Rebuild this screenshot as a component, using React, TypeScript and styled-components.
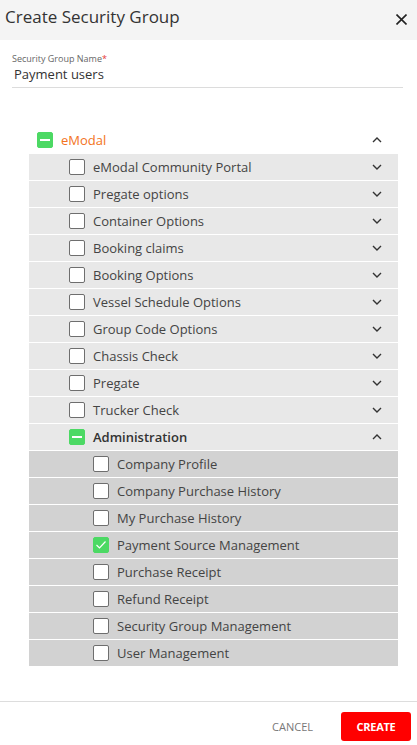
import React from 'react';
import styled, { createGlobalStyle } from 'styled-components';

type Mark = 'none' | 'checked' | 'partial';

interface Node {
  label: string;
  mark: Mark;
  open?: boolean;
  children?: Node[];
}

const admin: Node[] = [
  { label: 'Company Profile', mark: 'none' },
  { label: 'Company Purchase History', mark: 'none' },
  { label: 'My Purchase History', mark: 'none' },
  { label: 'Payment Source Management', mark: 'checked' },
  { label: 'Purchase Receipt', mark: 'none' },
  { label: 'Refund Receipt', mark: 'none' },
  { label: 'Security Group Management', mark: 'none' },
  { label: 'User Management', mark: 'none' },
];

const modules: Node[] = [
  { label: 'eModal Community Portal', mark: 'none' },
  { label: 'Pregate options', mark: 'none' },
  { label: 'Container Options', mark: 'none' },
  { label: 'Booking claims', mark: 'none' },
  { label: 'Booking Options', mark: 'none' },
  { label: 'Vessel Schedule Options', mark: 'none' },
  { label: 'Group Code Options', mark: 'none' },
  { label: 'Chassis Check', mark: 'none' },
  { label: 'Pregate', mark: 'none' },
  { label: 'Trucker Check', mark: 'none' },
  { label: 'Administration', mark: 'partial', open: true, children: admin },
];

const Chevron: React.FC<{ up?: boolean }> = ({ up }) => (
  <ChevronBox>
    <svg width="10" height="6" viewBox="0 0 10 6">
      <path
        d={up ? 'M1 5 L5 1 L9 5' : 'M1 1 L5 5 L9 1'}
        fill="none"
        stroke="#333"
        strokeWidth="1.4"
      />
    </svg>
  </ChevronBox>
);

const CheckBox: React.FC<{ mark: Mark }> = ({ mark }) => (
  <Box $on={mark !== 'none'}>
    {mark === 'checked' && (
      <svg width="12" height="10" viewBox="0 0 12 10">
        <path d="M1.5 5 L4.5 8 L10.5 1.5" fill="none" stroke="#fff" strokeWidth="1.2" />
      </svg>
    )}
    {mark === 'partial' && <Dash />}
  </Box>
);

const App: React.FC = () => {
  return (
    <>
      <GlobalStyle />
      <Dialog>
        <Header>
          <Title>Create Security Group</Title>
          <Close>
            <svg width="11" height="11" viewBox="0 0 11 11">
              <path d="M0.5 0.5 L10.5 10.5 M10.5 0.5 L0.5 10.5" stroke="#222" strokeWidth="1.6" />
            </svg>
          </Close>
        </Header>

        <Body>
          <Field>
            <Label>
              Security Group Name<Req>*</Req>
            </Label>
            <Value>Payment users</Value>
          </Field>

          <Tree>
            <RootRow>
              <CheckBox mark="partial" />
              <RootLabel>eModal</RootLabel>
              <Chevron up />
            </RootRow>
            {modules.map((m) => (
              <React.Fragment key={m.label}>
                <Row $level={1}>
                  <CheckBox mark={m.mark} />
                  <RowLabel $bold={!!m.children}>{m.label}</RowLabel>
                  <Chevron up={m.open} />
                </Row>
                {m.children?.map((c) => (
                  <Row key={c.label} $level={2}>
                    <CheckBox mark={c.mark} />
                    <RowLabel>{c.label}</RowLabel>
                  </Row>
                ))}
              </React.Fragment>
            ))}
          </Tree>
        </Body>

        <Footer>
          <CancelButton>CANCEL</CancelButton>
          <CreateButton>CREATE</CreateButton>
        </Footer>
      </Dialog>
    </>
  );
};

export default App;

const GlobalStyle = createGlobalStyle`
  body {
    margin: 0;
    background: #fff;
    font-family: "Open Sans", "Noto Sans", sans-serif;
  }
`;

const Dialog = styled.div`
  width: 417px;
  height: 745px;
  display: flex;
  flex-direction: column;
  background: #fff;
`;

const Header = styled.header`
  height: 40px;
  background: #f4f4f4;
  display: flex;
  align-items: center;
  justify-content: space-between;
  padding: 0 10px 7px 5px;
  box-sizing: border-box;
`;

const Title = styled.h1`
  margin: 0;
  font-size: 17px;
  font-weight: 400;
  color: #333;
`;

const Close = styled.span`
  display: flex;
  margin-top: 6px;
`;

const Body = styled.main`
  flex: 1;
  padding: 12px 14px 0 12px;
`;

const Field = styled.div`
  border-bottom: 1px solid #dcdcdc;
  padding-bottom: 4px;
`;

const Label = styled.div`
  font-size: 9px;
  color: #666;
  line-height: 13px;
`;

const Req = styled.span`
  color: #e53935;
`;

const Value = styled.div`
  font-size: 13px;
  color: #333;
  padding-left: 2px;
  line-height: 18px;
`;

const Tree = styled.div`
  margin: 39px 5px 0 17px;
  display: flex;
  flex-direction: column;
  gap: 1px;
`;

const ChevronBox = styled.span`
  margin-left: auto;
  width: 10px;
  display: flex;
  margin-right: 16px;
`;

const Box = styled.span<{ $on: boolean }>`
  width: 16px;
  height: 16px;
  box-sizing: border-box;
  border-radius: 2px;
  flex-shrink: 0;
  display: flex;
  align-items: center;
  justify-content: center;
  background: ${({ $on }) => ($on ? '#4cd964' : '#fff')};
  border: 1px solid ${({ $on }) => ($on ? '#4cd964' : '#6e6e6e')};
`;

const Dash = styled.span`
  width: 10px;
  height: 1.5px;
  background: #fff;
`;

const RootRow = styled.div`
  height: 26px;
  display: flex;
  align-items: center;
  gap: 8px;
  padding-left: 8px;
`;

const RootLabel = styled.span`
  font-size: 13px;
  color: #f37321;
`;

const Row = styled.div<{ $level: number }>`
  height: 26px;
  display: flex;
  align-items: center;
  gap: 8px;
  padding-left: ${({ $level }) => ($level === 1 ? 40 : 64)}px;
  background: ${({ $level }) => ($level === 1 ? '#e8e8e8' : '#d2d2d2')};
`;

const RowLabel = styled.span<{ $bold?: boolean }>`
  font-size: 13px;
  color: ${({ $bold }) => ($bold ? '#333' : '#444')};
  font-weight: ${({ $bold }) => ($bold ? 600 : 400)};
`;

const Footer = styled.footer`
  height: 44px;
  border-top: 1px solid #ddd;
  display: flex;
  align-items: center;
  justify-content: flex-end;
  gap: 28px;
  padding: 6px 6px 0 0;
  box-sizing: border-box;
`;

const CancelButton = styled.button`
  border: none;
  background: none;
  font-family: inherit;
  font-size: 11px;
  color: #777;
  padding: 0;
`;

const CreateButton = styled.button`
  width: 70px;
  height: 29px;
  border: none;
  border-radius: 3px;
  background: #ff0000;
  color: #fff;
  font-family: inherit;
  font-weight: 700;
  font-size: 11px;
  letter-spacing: -0.3px;
`;
